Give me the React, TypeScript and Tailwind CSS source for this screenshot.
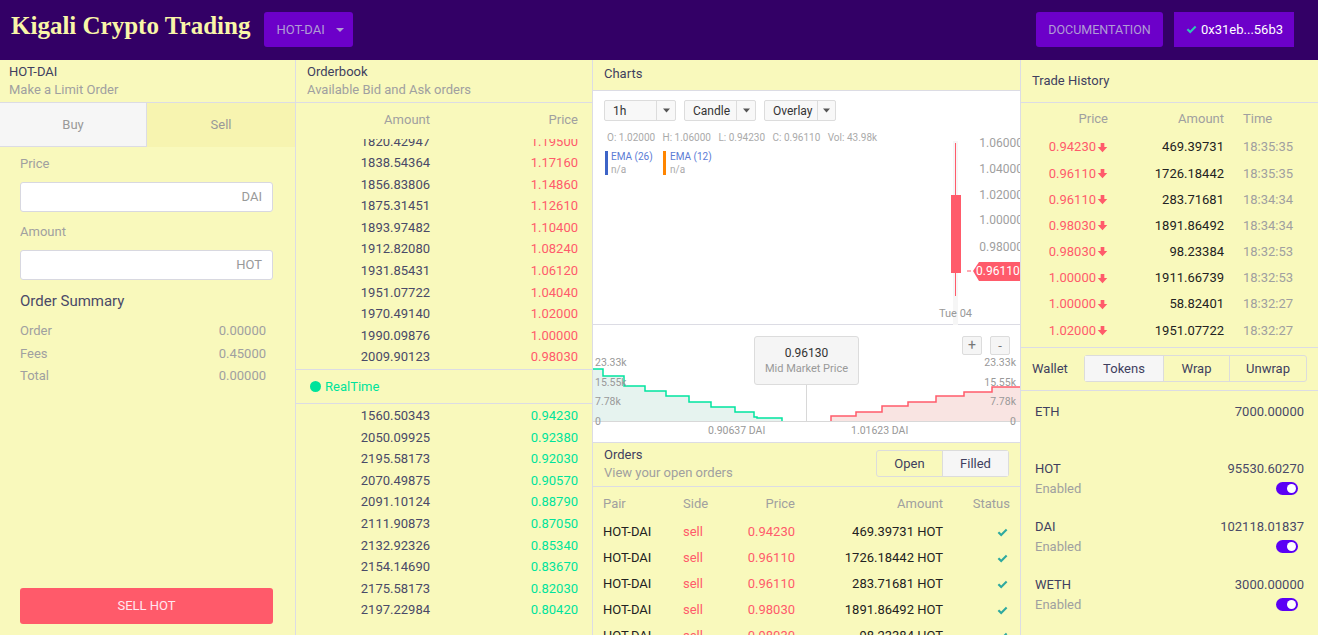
import React from "react";

const asks = [
  ["1820.42947", "1.19500"],
  ["1838.54364", "1.17160"],
  ["1856.83806", "1.14860"],
  ["1875.31451", "1.12610"],
  ["1893.97482", "1.10400"],
  ["1912.82080", "1.08240"],
  ["1931.85431", "1.06120"],
  ["1951.07722", "1.04040"],
  ["1970.49140", "1.02000"],
  ["1990.09876", "1.00000"],
  ["2009.90123", "0.98030"],
];

const bids = [
  ["1560.50343", "0.94230"],
  ["2050.09925", "0.92380"],
  ["2195.58173", "0.92030"],
  ["2070.49875", "0.90570"],
  ["2091.10124", "0.88790"],
  ["2111.90873", "0.87050"],
  ["2132.92326", "0.85340"],
  ["2154.14690", "0.83670"],
  ["2175.58173", "0.82030"],
  ["2197.22984", "0.80420"],
];

const trades = [
  ["0.94230", "469.39731", "18:35:35"],
  ["0.96110", "1726.18442", "18:35:35"],
  ["0.96110", "283.71681", "18:34:34"],
  ["0.98030", "1891.86492", "18:34:34"],
  ["0.98030", "98.23384", "18:32:53"],
  ["1.00000", "1911.66739", "18:32:53"],
  ["1.00000", "58.82401", "18:32:27"],
  ["1.02000", "1951.07722", "18:32:27"],
];

const orders = [
  ["0.94230", "469.39731"],
  ["0.96110", "1726.18442"],
  ["0.96110", "283.71681"],
  ["0.98030", "1891.86492"],
  ["0.98030", "98.23384"],
];

const tokens = [
  { name: "HOT", value: "95530.60270" },
  { name: "DAI", value: "102118.01837" },
  { name: "WETH", value: "3000.00000" },
];

const Check = ({ className = "" }: { className?: string }) => (
  <svg viewBox="0 0 16 16" className={className} fill="currentColor">
    <path d="M2 8.6 L3.9 6.8 L6.4 9.2 L12.2 3.4 L14 5.2 L6.4 12.8 Z" />
  </svg>
);

const DownArrow = () => (
  <svg viewBox="0 0 12 12" className="w-[11px] h-[11px] ml-[1px]" fill="currentColor">
    <path d="M4 1 H8 V5.4 H11.2 L6 11.2 L0.8 5.4 H4 Z" />
  </svg>
);

const Caret = () => (
  <svg viewBox="0 0 10 6" className="w-[7px] h-[5px]" fill="#555">
    <path d="M0 0 H10 L5 6 Z" />
  </svg>
);

const Select = ({ label, w, split }: { label: string; w: string; split: string }) => (
  <div className={`flex h-[21px] border border-[#dcdcdc] rounded-[2px] bg-[#f8f8f8] text-[12px] text-[#333] ${w}`}>
    <div className={`flex items-center pl-[8px] ${split}`}>{label}</div>
    <div className="flex-1 flex items-center justify-center border-l border-[#dcdcdc]">
      <Caret />
    </div>
  </div>
);

const Toggle = () => (
  <div className="w-[22px] h-[13px] rounded-full bg-[#5b00f5] flex items-center justify-end pr-[2px]">
    <div className="w-[9px] h-[9px] rounded-full bg-white" />
  </div>
);

function CandleChart() {
  const axis = [
    ["1.06000", 52],
    ["1.04000", 78],
    ["1.02000", 104],
    ["1.00000", 129],
    ["0.98000", 156],
  ];
  return (
    <svg width="427" height="234" className="block">
      <text x="14" y="50" fontSize="10" fill="#aaa" fontFamily="Roboto, sans-serif">
        O: 1.02000&#160;&#160;&#160;H: 1.06000&#160;&#160;&#160;L: 0.94230&#160;&#160;&#160;C: 0.96110&#160;&#160;&#160;Vol: 43.98k
      </text>
      <rect x="12" y="60" width="3" height="24" fill="#3d64c7" />
      <text x="18" y="69" fontSize="10" fill="#5b7bd5" fontFamily="Roboto, sans-serif">EMA (26)</text>
      <text x="18" y="82" fontSize="10" fill="#aaa" fontFamily="Roboto, sans-serif">n/a</text>
      <rect x="70" y="60" width="3" height="24" fill="#ff8500" />
      <text x="77" y="69" fontSize="10" fill="#5b7bd5" fontFamily="Roboto, sans-serif">EMA (12)</text>
      <text x="77" y="82" fontSize="10" fill="#aaa" fontFamily="Roboto, sans-serif">n/a</text>
      {axis.map(([v, y]) => (
        <text key={v} x="430" y={(y as number) + 4} fontSize="12" fill="#a0a0a0" textAnchor="end" fontFamily="Roboto, sans-serif">
          {v}
        </text>
      ))}
      <rect x="360" y="50" width="5" height="190" fill="#f6f6f6" />
      <line x1="362.5" y1="52" x2="362.5" y2="205" stroke="#ff5b6b" strokeWidth="1" />
      <rect x="358" y="104" width="10" height="78" fill="#ff5b6b" />
      <line x1="374" y1="180" x2="378" y2="180" stroke="#ff5b6b" />
      <path d="M380 180 L386 171 H427 V190 H386 Z" fill="#ff5b6b" />
      <text x="383" y="184" fontSize="12" fill="#fff" fontFamily="Roboto, sans-serif">0.96110</text>
      <text x="346" y="226" fontSize="11" fill="#999" fontFamily="Roboto, sans-serif">Tue 04</text>
    </svg>
  );
}

function DepthChart() {
  const green = "M0 44 H10 V51 H31 V61 H52 V66 H73 V71 H96 V77 H118 V82 H142 V87 H161 V92 H164 V93 H189 V96";
  const red = "M238 96 V91 H263 V87 H289 V81 H315 V77 H343 V71 H371 V67 H399 V62 H427";
  const font = "Roboto, sans-serif";
  return (
    <svg width="427" height="118" className="block">
      <path d={green + " H0 Z"} fill="#e6f3ef" />
      <path d={green} fill="none" stroke="#00e5a0" strokeWidth="1.5" />
      <path d={red + " V96 Z"} fill="#f9e4e2" />
      <path d={red} fill="none" stroke="#ff5b6b" strokeWidth="1.5" />
      <line x1="0" y1="96.5" x2="427" y2="96.5" stroke="#d8d8d8" />
      <line x1="213.5" y1="60" x2="213.5" y2="96" stroke="#d8d8d8" />
      <g fontSize="10.5" fill="#999" fontFamily={font}>
        <text x="2" y="41">23.33k</text>
        <text x="2" y="61">15.55k</text>
        <text x="2" y="80">7.78k</text>
        <text x="2" y="100">0</text>
        <text x="423" y="41" textAnchor="end">23.33k</text>
        <text x="423" y="61" textAnchor="end">15.55k</text>
        <text x="423" y="80" textAnchor="end">7.78k</text>
        <text x="423" y="100" textAnchor="end">0</text>
        <text x="115" y="109">0.90637 DAI</text>
        <text x="258" y="109">1.01623 DAI</text>
      </g>
    </svg>
  );
}

export default function App() {
  return (
    <div className="w-[1318px] h-[635px] overflow-hidden flex flex-col bg-[#f9f9bc] font-['Roboto',sans-serif] text-[#4a4a68]">
      <header className="h-[60px] shrink-0 bg-[#330066] flex items-center px-[11px]">
        <h1 className="font-['Liberation_Serif',serif] font-bold text-[25px] text-[#f9f6a8] -mt-[8px]">
          Kigali Crypto Trading
        </h1>
        <button className="ml-[14px] -mt-[1px] h-[35px] w-[89px] rounded-[3px] bg-[#6c00c9] text-[#b09cd4] text-[13px] flex items-center pl-[12px]">
          HOT-DAI
          <svg viewBox="0 0 10 5" className="w-[8px] h-[4px] ml-[11px]" fill="#b09cd4">
            <path d="M0 0 H10 L5 5 Z" />
          </svg>
        </button>
        <div className="flex-1" />
        <button className="h-[35px] w-[127px] rounded-[3px] bg-[#6c00c9] text-[#b09cd4] text-[12.5px] -mt-[1px] pt-[2px]">
          DOCUMENTATION
        </button>
        <button className="ml-[11px] mr-[13px] -mt-[1px] h-[35px] w-[120px] bg-[#6c00c9] text-white text-[13px] flex items-center justify-center">
          <Check className="w-[13px] h-[13px] text-[#2ec5b5] mr-[3px]" />
          0x31eb...56b3
        </button>
      </header>

      <main className="flex flex-1 min-h-0">
        {/* Order form */}
        <section className="w-[296px] shrink-0 border-r border-[#dcdce4] flex flex-col">
          <div className="h-[43px] shrink-0 border-b border-[#dcdce4] pl-[9px] pt-[3px]">
            <div className="text-[13px] text-[#3f3f5f] leading-[17px]">HOT-DAI</div>
            <div className="text-[13px] text-[#a0a0a0] leading-[20px]">Make a Limit Order</div>
          </div>
          <div className="flex h-[44px] shrink-0">
            <div className="w-[147px] bg-[#f6f6f6] border-r border-b border-[#dcdce4] flex items-center justify-center text-[13px] text-[#999]">
              Buy
            </div>
            <div className="flex-1 bg-[#f7f4b0] flex items-center justify-center text-[13px] text-[#999]">Sell</div>
          </div>
          <div className="pl-[20px] pr-[22px] flex flex-col flex-1">
            <div className="text-[13px] leading-[16px] text-[#a0a0a0] mt-[9px]">Price</div>
            <div className="mt-[10px] h-[30px] bg-white border border-[#d8d8e0] rounded-[3px] flex items-center justify-end pr-[10px] text-[13px] text-[#999]">
              DAI
            </div>
            <div className="text-[13px] leading-[16px] text-[#a0a0a0] mt-[12px]">Amount</div>
            <div className="mt-[10px] h-[30px] bg-white border border-[#d8d8e0] rounded-[3px] flex items-center justify-end pr-[10px] text-[13px] text-[#999]">
              HOT
            </div>
            <div className="text-[15px] leading-[20px] text-[#4a4a68] mt-[11px]">Order Summary</div>
            <div className="mt-[11px] flex flex-col gap-[4.5px] text-[13px] text-[#a0a0a0] pr-[7px]">
              <div className="flex justify-between leading-[18px]"><span>Order</span><span>0.00000</span></div>
              <div className="flex justify-between leading-[18px]"><span>Fees</span><span>0.45000</span></div>
              <div className="flex justify-between leading-[18px]"><span>Total</span><span>0.00000</span></div>
            </div>
            <div className="flex-1" />
            <button className="mb-[11px] h-[36px] rounded-[3px] bg-[#ff5a6a] text-[#ffe8f0] text-[13px]">SELL HOT</button>
          </div>
        </section>

        {/* Orderbook */}
        <section className="w-[297px] shrink-0 border-r border-[#dcdce4] flex flex-col overflow-hidden">
          <div className="h-[43px] shrink-0 border-b border-[#dcdce4] pl-[11px] pt-[3px]">
            <div className="text-[13px] text-[#3f3f5f] leading-[17px]">Orderbook</div>
            <div className="text-[13px] text-[#a0a0a0] leading-[20px]">Available Bid and Ask orders</div>
          </div>
          <div className="flex h-[36px] shrink-0 items-center text-[13px] text-[#a0a0a0] pb-[2px]">
            <div className="w-[134px] text-right">Amount</div>
            <div className="w-[148px] text-right">Price</div>
          </div>
          <div className="h-[230px] shrink-0 overflow-hidden flex flex-col justify-end pb-[1px]">
            {asks.map(([a, p]) => (
              <div key={a} className="flex h-[21.6px] shrink-0 items-center text-[13px]">
                <div className="w-[134px] text-right text-[#4a4a68]">{a}</div>
                <div className="w-[148px] text-right text-[#ff5b6b]">{p}</div>
              </div>
            ))}
          </div>
          <div className="h-[35px] shrink-0 border-y border-[#dcdce4] flex items-center pl-[14px] text-[13px] text-[#00e39b]">
            <span className="w-[11px] h-[11px] rounded-full bg-[#00e39b] mr-[4px]" />
            RealTime
          </div>
          <div className="pt-[1px] shrink-0">
            {bids.map(([a, p]) => (
              <div key={a} className="flex h-[21.6px] items-center text-[13px]">
                <div className="w-[134px] text-right text-[#4a4a68]">{a}</div>
                <div className="w-[148px] text-right text-[#00e39b]">{p}</div>
              </div>
            ))}
          </div>
        </section>

        {/* Charts + Orders */}
        <section className="w-[428px] shrink-0 border-r border-[#dcdce4] flex flex-col overflow-hidden">
          <div className="h-[31px] shrink-0 border-b border-[#dcdce4] pl-[11px] flex items-center text-[13px] text-[#3f3f5f] pb-[3px]">
            Charts
          </div>
          <div className="bg-white relative h-[234px] shrink-0 border-b border-[#dcdce4]">
            <div className="absolute left-[11px] top-[9px] flex gap-[8px]">
              <Select label="1h" w="w-[72px]" split="w-[51px]" />
              <Select label="Candle" w="w-[72px]" split="w-[51px]" />
              <Select label="Overlay" w="w-[72px]" split="w-[52px]" />
            </div>
            <CandleChart />
          </div>
          <div className="bg-white relative h-[117px] shrink-0">
            <DepthChart />
            <div className="absolute left-[161px] top-[11px] w-[105px] h-[49px] bg-[#f5f5f5] border border-[#dcdcdc] rounded-[3px] flex flex-col items-center justify-center">
              <div className="text-[12px] text-[#333] leading-[16px]">0.96130</div>
              <div className="text-[11px] text-[#999] leading-[16px]">Mid Market Price</div>
            </div>
            <div className="absolute left-[369px] top-[11px] w-[20px] h-[19px] bg-[#f5f5f5] border border-[#dcdcdc] rounded-[2px] flex items-center justify-center text-[14px] text-[#777]">
              +
            </div>
            <div className="absolute left-[397px] top-[11px] w-[20px] h-[19px] bg-[#f5f5f5] border border-[#dcdcdc] rounded-[2px] flex items-center justify-center text-[13px] text-[#777]">
              -
            </div>
          </div>
          <div className="h-[45px] shrink-0 border-t border-b border-[#dcdce4] flex items-center pl-[11px] pr-[11px]">
            <div className="flex-1">
              <div className="text-[13px] text-[#3f3f5f] leading-[17px]">Orders</div>
              <div className="text-[13px] text-[#a0a0a0] leading-[20px]">View your open orders</div>
            </div>
            <div className="flex h-[27px] border border-[#dcdcdc] rounded-[3px] text-[13px] text-[#3f3f5f] -mt-[2px]">
              <div className="w-[65px] flex items-center justify-center">Open</div>
              <div className="w-[66px] flex items-center justify-center bg-[#f6f6f6] border-l border-[#dcdcdc]">Filled</div>
            </div>
          </div>
          <div className="text-[13px] pl-[10px] pr-[10px] pt-[1px] shrink-0">
            <div className="flex h-[31px] items-center text-[#a0a0a0]">
              <div className="w-[80px]">Pair</div>
              <div className="w-[60px]">Side</div>
              <div className="w-[52px] text-right">Price</div>
              <div className="w-[148px] text-right">Amount</div>
              <div className="flex-1 text-right">Status</div>
            </div>
            {orders.map(([p, a], i) => (
              <div key={i} className="flex h-[26px] items-center">
                <div className="w-[80px] text-[#222]">HOT-DAI</div>
                <div className="w-[60px] text-[#ff5b6b]">sell</div>
                <div className="w-[52px] text-right text-[#ff5b6b]">{p}</div>
                <div className="w-[148px] text-right text-[#222]">{a} HOT</div>
                <div className="flex-1 flex justify-end pr-[1px]">
                  <Check className="w-[13px] h-[13px] text-[#2ea9a0]" />
                </div>
              </div>
            ))}
          </div>
        </section>

        {/* Trade history + wallet */}
        <section className="flex-1 flex flex-col overflow-hidden">
          <div className="h-[43px] shrink-0 border-b border-[#dcdce4] pl-[11px] flex items-center text-[13px] text-[#3f3f5f]">
            Trade History
          </div>
          <div className="text-[13px] shrink-0 pt-[1px]">
            <div className="flex h-[30px] items-center text-[#a0a0a0]">
              <div className="w-[87px] text-right">Price</div>
              <div className="w-[116px] text-right">Amount</div>
              <div className="pl-[19px]">Time</div>
            </div>
            {trades.map(([p, a, t], i) => (
              <div key={i} className="flex h-[26.2px] items-center">
                <div className="w-[87px] flex justify-end items-center text-[#ff5b6b]">
                  {p}
                  <DownArrow />
                </div>
                <div className="w-[116px] text-right text-[#222]">{a}</div>
                <div className="pl-[19px] text-[#a0a0a0]">{t}</div>
              </div>
            ))}
          </div>
          <div className="mt-[3px] h-[44px] shrink-0 border-y border-[#dcdce4] flex items-center pl-[11px] text-[13px]">
            <div className="w-[52px] text-[#3f3f5f]">Wallet</div>
            <div className="flex h-[27px] border border-[#dcdcdc] rounded-[3px] text-[#3f3f5f]">
              <div className="w-[78px] flex items-center justify-center bg-[#f6f6f6]">Tokens</div>
              <div className="w-[66px] flex items-center justify-center border-l border-[#dcdcdc]">Wrap</div>
              <div className="w-[77px] flex items-center justify-center border-l border-[#dcdcdc]">Unwrap</div>
            </div>
          </div>
          <div className="px-[14px] text-[13px] pt-[11px] shrink-0">
            <div className="flex justify-between h-[58px]">
              <span className="text-[#3f3f5f]">ETH</span>
              <span>7000.00000</span>
            </div>
            {tokens.map((t) => (
              <div key={t.name} className="h-[58px]">
                <div className="flex justify-between leading-[17px]">
                  <span className="text-[#3f3f5f]">{t.name}</span>
                  <span>{t.value}</span>
                </div>
                <div className="flex justify-between items-center mt-[2px] pr-[6px]">
                  <span className="text-[#a0a0a0]">Enabled</span>
                  <Toggle />
                </div>
              </div>
            ))}
          </div>
        </section>
      </main>
    </div>
  );
}
